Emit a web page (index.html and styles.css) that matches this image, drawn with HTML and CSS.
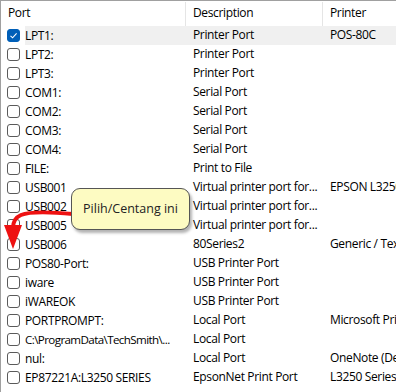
FILE: index.html
```html
<!DOCTYPE html>
<html lang="en">
<head>
    <meta charset="UTF-8">
    <title>Ports</title>
    <link rel="stylesheet" href="styles.css">
</head>
<body>
    <div class="list">
        <div class="head">
            <div class="col port">Port</div>
            <div class="col desc">Description</div>
            <div class="col printer">Printer</div>
        </div>
        <div class="row selected">
            <div class="col port"><span class="box checked"><svg viewBox="0 0 13 13" width="13" height="13"><path d="M3.5 6.8 L5.6 8.8 L9.6 4.4" fill="none" stroke="#fff" stroke-width="1.1"/></svg></span><span class="name">LPT1:</span></div>
            <div class="col desc">Printer Port</div>
            <div class="col printer">POS-80C</div>
        </div>
        <div class="row">
            <div class="col port"><span class="box"></span><span class="name">LPT2:</span></div>
            <div class="col desc">Printer Port</div>
            <div class="col printer"></div>
        </div>
        <div class="row">
            <div class="col port"><span class="box"></span><span class="name">LPT3:</span></div>
            <div class="col desc">Printer Port</div>
            <div class="col printer"></div>
        </div>
        <div class="row">
            <div class="col port"><span class="box"></span><span class="name">COM1:</span></div>
            <div class="col desc">Serial Port</div>
            <div class="col printer"></div>
        </div>
        <div class="row">
            <div class="col port"><span class="box"></span><span class="name">COM2:</span></div>
            <div class="col desc">Serial Port</div>
            <div class="col printer"></div>
        </div>
        <div class="row">
            <div class="col port"><span class="box"></span><span class="name">COM3:</span></div>
            <div class="col desc">Serial Port</div>
            <div class="col printer"></div>
        </div>
        <div class="row">
            <div class="col port"><span class="box"></span><span class="name">COM4:</span></div>
            <div class="col desc">Serial Port</div>
            <div class="col printer"></div>
        </div>
        <div class="row">
            <div class="col port"><span class="box"></span><span class="name">FILE:</span></div>
            <div class="col desc">Print to File</div>
            <div class="col printer"></div>
        </div>
        <div class="row">
            <div class="col port"><span class="box"></span><span class="name">USB001</span></div>
            <div class="col desc">Virtual printer port for...</div>
            <div class="col printer">EPSON L3250 Series</div>
        </div>
        <div class="row">
            <div class="col port"><span class="box"></span><span class="name">USB002</span></div>
            <div class="col desc">Virtual printer port for...</div>
            <div class="col printer"></div>
        </div>
        <div class="row">
            <div class="col port"><span class="box"></span><span class="name">USB005</span></div>
            <div class="col desc">Virtual printer port for...</div>
            <div class="col printer"></div>
        </div>
        <div class="row">
            <div class="col port"><span class="box"></span><span class="name">USB006</span></div>
            <div class="col desc">80Series2</div>
            <div class="col printer">Generic / Text Only</div>
        </div>
        <div class="row">
            <div class="col port"><span class="box"></span><span class="name">POS80-Port:</span></div>
            <div class="col desc">USB Printer Port</div>
            <div class="col printer"></div>
        </div>
        <div class="row">
            <div class="col port"><span class="box"></span><span class="name">iware</span></div>
            <div class="col desc">USB Printer Port</div>
            <div class="col printer"></div>
        </div>
        <div class="row">
            <div class="col port"><span class="box"></span><span class="name">iWAREOK</span></div>
            <div class="col desc">USB Printer Port</div>
            <div class="col printer"></div>
        </div>
        <div class="row">
            <div class="col port"><span class="box"></span><span class="name">PORTPROMPT:</span></div>
            <div class="col desc">Local Port</div>
            <div class="col printer">Microsoft Print to PDF</div>
        </div>
        <div class="row">
            <div class="col port"><span class="box"></span><span class="name long">C:\ProgramData\TechSmith\...</span></div>
            <div class="col desc">Local Port</div>
            <div class="col printer"></div>
        </div>
        <div class="row">
            <div class="col port"><span class="box"></span><span class="name">nul:</span></div>
            <div class="col desc">Local Port</div>
            <div class="col printer">OneNote (Desktop)</div>
        </div>
        <div class="row">
            <div class="col port"><span class="box"></span><span class="name">EP87221A:L3250 SERIES</span></div>
            <div class="col desc">EpsonNet Print Port</div>
            <div class="col printer">L3250 Series(Network)</div>
        </div>

        <!-- annotation on top of the list -->
        <svg class="arrow" width="80" height="70" viewBox="0 0 80 70">
            <path d="M72 33 C50 31 30 30 20 34 C13 37 12 42 12 47" fill="none" stroke="#ee1111" stroke-width="4"/>
            <path d="M3 44 L21 44 L12 68 Z" fill="#ee1111"/>
        </svg>
        <div class="callout">Pilih/Centang ini</div>
    </div>
</body>
</html>
```

FILE: styles.css
```css
html, body {
    margin: 0;
    padding: 0;
    background: #fff;
    overflow: hidden;
}
body {
    font-family: "Open Sans", "Noto Sans", sans-serif;
    font-size: 12px;
    letter-spacing: -0.35px;
    color: #000;
}
.list {
    position: relative;
    width: 396px;
    height: 392px;
    border-top: 1px solid #a0a0a0;
    border-left: 1px solid #a0a0a0;
    box-sizing: border-box;
    overflow: hidden;
}
.head, .row {
    display: grid;
    grid-template-columns: 185px 137px 140px;
    white-space: nowrap;
}
.head {
    height: 25px;
    align-items: center;
}
.head .col {
    height: 24px;
    line-height: 22px;
    padding-left: 7px;
    border-right: 1px solid #e5e5e5;
    box-sizing: border-box;
}
.head .printer {
    border-right: none;
}
.row {
    height: 19px;
    line-height: 18px;
}
.row .col {
    overflow: hidden;
}
.row .port {
    display: flex;
    align-items: center;
}
.row .desc {
    padding-left: 7px;
}
.row .printer {
    padding-left: 7px;
}
.row.selected .desc,
.row.selected .printer,
.row.selected .name {
    background: #f0f0f0;
}
.row.selected .name {
    flex: 1;
    margin-left: 3px;
}
.box {
    width: 13px;
    height: 13px;
    margin-left: 6px;
    margin-right: 5px;
    border: 1px solid #5a5a5a;
    border-radius: 3px;
    box-sizing: border-box;
    flex: none;
}
.box.checked {
    background: #005fb8;
    border-color: #005fb8;
    margin-right: 2px;
}
.box svg {
    display: block;
    margin: -1px;
}
.name {
    line-height: 19px;
}
.name.long {
    font-size: 11.6px;
    letter-spacing: -0.6px;
}
.callout {
    position: absolute;
    left: 70px;
    top: 187px;
    width: 119px;
    height: 42px;
    box-sizing: border-box;
    background: #fdfbc2;
    border: 1px solid #555;
    border-radius: 9px;
    box-shadow: 2px 3px 3px rgba(0, 0, 0, 0.3);
    font-size: 12.5px;
    letter-spacing: 0;
    line-height: 40px;
    text-align: center;
    color: #222;
}
.arrow {
    position: absolute;
    left: 0;
    top: 180px;
}
```
